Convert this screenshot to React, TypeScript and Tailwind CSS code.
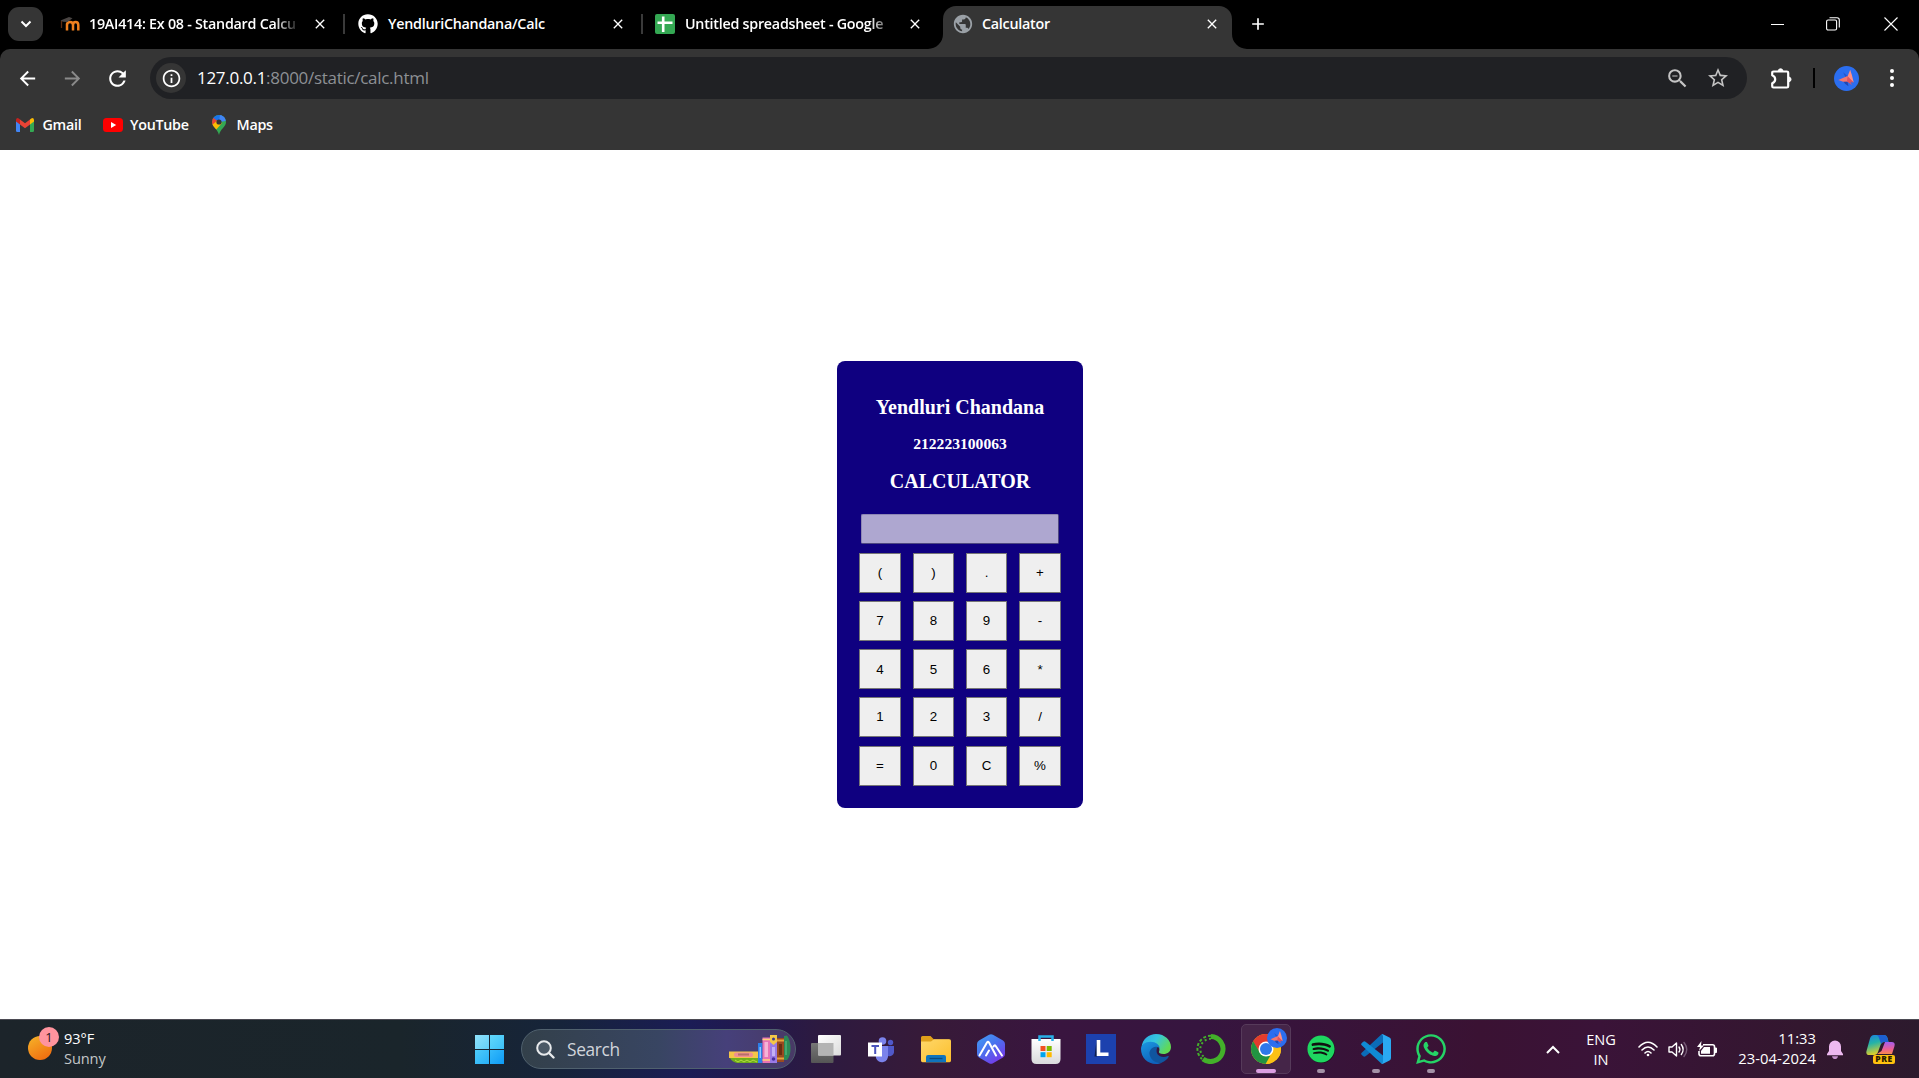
import React from "react";
import { MdArrowBack, MdArrowForward, MdRefresh, MdZoomOut, MdStarBorder, MdPublic, MdClose, MdAdd, MdInfoOutline } from "react-icons/md";
import { FaGithub, FaSpotify, FaWhatsapp } from "react-icons/fa";

const titleCls = "shrink-0 whitespace-nowrap text-[14.3px] font-semibold tracking-[-0.25px] leading-[20px] text-white";
const fadeCls = "[mask-image:linear-gradient(to_right,black_88%,transparent)]";

function TabClose() {
  return <MdClose className="size-[16px] shrink-0 text-white" />;
}

function Butterfly({ className }: { className: string }) {
  return (
    <svg viewBox="0 0 26 26" className={className}>
      <circle cx="13" cy="13" r="13" fill="#2b6ef0" />
      <path d="M9.500 6.500L14.500 11L12.500 13Z" fill="#2554cc" />
      <path d="M9 15L14 16L15 21L11.500 18.500Z" fill="#2346b0" />
      <path d="M4.500 14.500L14 10.500L15 16L9.500 16.500Z" fill="#f4766e" />
      <path d="M16.800 4L18.500 9L20.500 17L13.500 12.500Z" fill="#ff8f86" />
      <path d="M14 10.500L20.500 17.200L17 16.800L19 20L13.500 16Z" fill="#e2545e" />
    </svg>
  );
}

function MoodleIcon() {
  return (
    <svg viewBox="0 0 20 20" className="size-5 shrink-0">
      <path d="M7 16.500V9.500M7 11q0-3 3-3q3 0 3 3v5.500M13 11q0-3 2.600-3q2.700 0 2.700 3v5.500" fill="none" stroke="#f0801f" strokeWidth="2.500" />
      <path d="M0.500 6.500L9 3L12.500 4.200L7.500 8L3 7.800Z" fill="#4a4543" />
      <path d="M1.500 7V14" stroke="#5a2c12" strokeWidth="1.300" />
    </svg>
  );
}

function SheetsIcon() {
  return (
    <svg viewBox="0 0 20 20" className="size-5 shrink-0">
      <rect width="20" height="20" rx="2" fill="#34a853" />
      <path d="M8.200 2.500V18M2.500 8.800H17.500" stroke="#fff" strokeWidth="2.600" />
    </svg>
  );
}

function TabStrip() {
  return (
    <div className="flex h-[49px] shrink-0 items-start bg-black">
      <div className="ml-2 mt-[7px] flex h-[34px] w-[35px] shrink-0 items-center justify-center rounded-[11px] bg-[#353535]">
        <svg viewBox="0 0 12 8" className="h-[8px] w-[12px]"><path d="M1.500 1.500L6 6L10.500 1.500" stroke="#fff" strokeWidth="2" fill="none" /></svg>
      </div>
      <div className="flex h-12 w-[300px] shrink-0 items-center pl-[17px]">
        <MoodleIcon />
        <span className={`${titleCls} ${fadeCls} ml-[9px] w-[211px]`}>19AI414: Ex 08 - Standard Calcu</span>
        <span className="ml-[12px] flex"><TabClose /></span>
      </div>
      <div className="flex h-12 w-[298px] shrink-0 items-center">
        <span className="h-5 w-[2px] bg-[#3a3a3a]" />
        <FaGithub className="ml-[13px] size-[20px] shrink-0 text-white" />
        <span className={`${titleCls} ml-[10px] w-[210px]`}>YendluriChandana/Calc</span>
        <span className="ml-[12px] flex"><TabClose /></span>
      </div>
      <div className="flex h-12 w-[302px] shrink-0 items-center">
        <span className="h-5 w-[2px] bg-[#3a3a3a]" />
        <span className="ml-[12px] flex"><SheetsIcon /></span>
        <span className={`${titleCls} ${fadeCls} ml-[10px] w-[210px]`}>Untitled spreadsheet - Google</span>
        <span className="ml-[12px] flex"><TabClose /></span>
      </div>
      <div className="relative mt-[6px] flex h-[43px] w-[289px] shrink-0 items-center rounded-t-[13px] bg-[#353535] pb-[7px]">
        <svg viewBox="0 0 15 15" className="absolute bottom-0 -left-[15px] size-[15px]"><path d="M15 0V15H0A15 15 0 0 0 15 0Z" fill="#353535" /></svg>
        <svg viewBox="0 0 15 15" className="absolute bottom-0 -right-[15px] size-[15px]"><path d="M0 0V15H15A15 15 0 0 1 0 0Z" fill="#353535" /></svg>
        <MdPublic className="ml-[9px] size-[22px] shrink-0 text-[#9aa0a6]" />
        <span className={`${titleCls} ml-[8px] w-[222px]`}>Calculator</span>
        <TabClose />
      </div>
      <MdAdd className="ml-[16px] mt-[14px] size-[20px] text-white" />
      <div className="ml-auto mr-[21px] flex h-12 items-center">
        <span className="mr-[42px] h-px w-[13px] bg-white" />
        <svg viewBox="0 0 14 14" className="mr-[44px] size-[14px]" fill="none" stroke="#fff" strokeWidth="1.100">
          <rect x="0.600" y="3" width="10" height="10" rx="1.500" />
          <path d="M3.500 0.700H11Q13.300 0.700 13.300 3V10.500" />
        </svg>
        <svg viewBox="0 0 14 14" className="size-[14px]"><path d="M0.500 0.500L13.500 13.500M13.500 0.500L0.500 13.500" stroke="#fff" strokeWidth="1.100" /></svg>
      </div>
    </div>
  );
}

function Toolbar() {
  return (
    <div className="shrink-0 bg-black">
      <div className="flex h-[58px] items-start rounded-t-[10px] bg-[#353535] pt-2">
        <div className="flex h-[42px] w-[150px] shrink-0 items-center">
          <MdArrowBack className="ml-[16px] size-[23px] text-white" />
          <MdArrowForward className="ml-[22px] size-[23px] text-[#8a8a8a]" />
          <MdRefresh className="ml-[21px] size-[25px] text-white" />
        </div>
        <div className="flex h-[42px] w-[1597px] shrink-0 items-center rounded-full bg-[#202124] pl-[6px]">
          <span className="flex size-[30px] items-center justify-center rounded-full bg-[#353535]">
            <MdInfoOutline className="size-[21px] text-white" />
          </span>
          <span className="ml-[11px] whitespace-nowrap text-[17px] tracking-[-0.290px] text-[#8d9094]">
            <span className="text-white">127.0.0.1</span>:8000/static/calc.html
          </span>
          <MdZoomOut className="ml-auto size-[25px] text-[#c4c4c4]" />
          <MdStarBorder className="ml-[16px] mr-[17px] size-[24px] text-[#c4c4c4]" />
        </div>
        <div className="flex h-[42px] items-center">
          <svg viewBox="0 0 22 23" className="ml-[24px] h-[23px] w-[22px]">
            <path d="M2.500 4.500Q1.200 4.500 1.200 5.800V8.200Q4.200 9.500 4.200 12.200Q4.200 15 1.200 16.300V19.200Q1.200 20.500 2.500 20.500H15.800Q17.200 20.500 17.200 19.200V5.800Q17.200 4.500 15.800 4.500Z" fill="none" stroke="#fff" strokeWidth="2.200" strokeLinejoin="round" />
            <path d="M7.200 3.600A2.500 2.500 0 0 1 12 3.600ZM18.200 10A2.500 2.500 0 0 1 18.200 14.800Z" fill="#fff" stroke="#fff" />
          </svg>
          <span className="ml-[20px] h-5 w-[2px] bg-black" />
          <Butterfly className="ml-[19px] size-[25px]" />
          <span className="ml-[31px] flex flex-col gap-[3px]">
            <i className="size-1 rounded-full bg-white" />
            <i className="size-1 rounded-full bg-white" />
            <i className="size-1 rounded-full bg-white" />
          </span>
        </div>
      </div>
    </div>
  );
}

function Bookmarks() {
  const t = "whitespace-nowrap text-[14.300px] font-semibold tracking-[-0.270px] leading-[20px] text-white";
  return (
    <div className="flex h-[43px] shrink-0 items-start bg-[#353535] pl-4">
      <div className="flex h-[36px] w-[87px] items-center gap-[8.5px]">
        <svg viewBox="0 0 18 14" className="h-[14px] w-[18px]">
          <path d="M0 2V12.800Q0 14 1.200 14H4V5Z" fill="#4285f4" />
          <path d="M18 2V12.800Q18 14 16.800 14H14V5Z" fill="#34a853" />
          <path d="M14 1.500V6.500L18 3.500V2Q18 0 16.200 0Q15.500 0 14 1.500Z" fill="#fbbc04" />
          <path d="M0 3.500V2Q0 0 1.800 0Q2.500 0 4 1.500V6.500Z" fill="#c5221f" />
          <path d="M4 1.400L9 5.200L14 1.400V6.500L9 10.300L4 6.500Z" fill="#ea4335" />
        </svg>
        <span className={t}>Gmail</span>
      </div>
      <div className="flex h-[36px] w-[109px] items-center gap-[7px]">
        <svg viewBox="0 0 20 14" className="h-[14px] w-[20px]"><rect width="20" height="14" rx="3.500" fill="#f00" /><path d="M8 4L13.200 7L8 10Z" fill="#fff" /></svg>
        <span className={t}>YouTube</span>
      </div>
      <div className="flex h-[36px] items-center gap-[10.5px]">
        <svg viewBox="0 0 14 20" className="h-[20px] w-[14px]">
          <defs><clipPath id="pin"><path d="M7 0A7 7 0 0 0 0 7C0 12 5.500 13.500 7 20C8.500 13.500 14 12 14 7A7 7 0 0 0 7 0Z" /></clipPath></defs>
          <g clipPath="url(#pin)">
            <rect width="14" height="20" fill="#34a853" />
            <path d="M0 0H14V3L7 7L0 3Z" fill="#1a73e8" />
            <path d="M8 0H14V6L7 7Z" fill="#4285f4" />
            <path d="M0 2L7 7L1 13L-1 8Z" fill="#ea4335" />
            <path d="M0 10L6 5L10 8L3 16Z" fill="#fbbc04" />
          </g>
          <circle cx="7" cy="7" r="2.600" fill="#353535" />
        </svg>
        <span className={t}>Maps</span>
      </div>
    </div>
  );
}

const rows = [
  ["(", ")", ".", "+"],
  ["7", "8", "9", "-"],
  ["4", "5", "6", "*"],
  ["1", "2", "3", "/"],
  ["=", "0", "C", "%"],
];

function Calculator() {
  return (
    <div className="ml-[837px] flex h-[447px] w-[246px] flex-col rounded-[8px] bg-[#0f0080] px-[22px] pt-[35px] text-center font-['Liberation_Serif',serif] font-bold text-white">
      <div className="h-[24px] text-[20px] leading-[23px]">Yendluri Chandana</div>
      <div className="mt-[14px] h-[20px] text-[15.6px] leading-[20px]">212223100063</div>
      <div className="mt-[16px] h-[24px] text-[20px] leading-[22px]">CALCULATOR</div>
      <div className="ml-[2px] mt-[20px] h-[30px] w-[198px] shrink-0 rounded-[2px] border border-[#8d86b4] border-b-[#4d4780] border-r-[#4d4780] bg-[#aea7d0]" />
      <div className="mt-[9px] grid grid-cols-[42px_41px_41px_42px] grid-rows-[40px_40px_40px_41px_40px] gap-x-[12px] gap-y-[8px]">
        {rows.map((row, r) =>
          row.map((k) => (
            <button
              key={k}
              className={`h-[40px] border border-[#767676] bg-[#efefef] font-['Liberation_Sans',sans-serif] text-[13.333px] font-normal leading-none text-black ${r === 2 ? "pt-[2px]" : ""}`}
            >
              {k}
            </button>
          )),
        )}
      </div>
    </div>
  );
}

function TaskItem({ children, dot, active }: { children: React.ReactNode; dot?: boolean; active?: boolean }) {
  return (
    <div className={`relative flex h-[50px] w-[50px] shrink-0 items-center justify-center rounded-[5px] ${active ? "border border-[#563a5a] bg-[#452548]" : ""}`}>
      {children}
      {dot && <span className="absolute bottom-[1px] left-[21px] h-[4px] w-[8px] rounded-full bg-[#a391a6]" />}
      {active && <span className="absolute bottom-0 left-[14px] h-[4px] w-[20px] rounded-full bg-[#dc9fe2]" />}
    </div>
  );
}

const ic = "size-[30px]";

function TaskIcons() {
  return (
    <div className="ml-[5px] flex gap-[5px]">
      <TaskItem>
        <svg viewBox="0 0 30 30" className={ic}>
          <defs>
            <linearGradient id="tv1" x2="1" y2="1"><stop stopColor="#fff" /><stop offset="1" stopColor="#dcdcdc" /></linearGradient>
            <linearGradient id="tv2" x2="0" y2="1"><stop stopColor="#777" /><stop offset="1" stopColor="#555" /></linearGradient>
          </defs>
          <rect x="0" y="9" width="22.500" height="20" rx="1" fill="url(#tv2)" />
          <rect x="7" y="1" width="23" height="20.500" rx="1" fill="url(#tv1)" />
          <path d="M7 9H22.500V21.500H8Q7 21.500 7 20.500Z" fill="#b4b4b4" />
        </svg>
      </TaskItem>
      <TaskItem>
        <svg viewBox="0 0 30 30" className={ic}>
          <circle cx="16.500" cy="7" r="3.800" fill="#7b83eb" />
          <circle cx="24.500" cy="8.500" r="2.700" fill="#5059c9" />
          <path d="M19 12H28V18.500A5 5 0 0 1 19 20Z" fill="#5059c9" />
          <path d="M9 12H22V21A6.200 6.200 0 0 1 10 24Z" fill="#7b83eb" />
          <rect x="2" y="8.500" width="14" height="14" fill="#fff" />
          <path d="M5.500 12H13M9.200 12V20" stroke="#4b53bc" strokeWidth="2" />
        </svg>
      </TaskItem>
      <TaskItem>
        <svg viewBox="0 0 30 30" className={ic}>
          <defs><linearGradient id="fe" x2="1" y2="1"><stop stopColor="#ffd76a" /><stop offset="1" stopColor="#fcbf2c" /></linearGradient></defs>
          <path d="M0 3.500Q0 2 1.500 2H9.500L13 5.500H28V12H0Z" fill="#e0a01a" />
          <path d="M0 7.500H10L13 5.200H28.500Q30 5.200 30 7V26.500Q30 28.200 28.500 28.200H1.500Q0 28.200 0 26.500Z" fill="url(#fe)" />
          <path d="M5 28.200V23Q5 21 7 21H23Q25 21 25 23V28.200Z" fill="#0f74bd" />
          <path d="M8.500 24.500H21.500" stroke="#0a4a80" strokeWidth="1.300" />
        </svg>
      </TaskItem>
      <TaskItem>
        <svg viewBox="0 0 30 30" className={ic}>
          <defs><linearGradient id="hx" x2="0.700" y2="1"><stop stopColor="#40a2f5" /><stop offset="0.500" stopColor="#4a72ee" /><stop offset="1" stopColor="#7638ea" /></linearGradient></defs>
          <path d="M13 0.800Q15-0.500 17 0.800L27 6.500Q29 7.700 29 10V20Q29 22.300 27 23.500L17 29.200Q15 30.500 13 29.200L3 23.500Q1 22.300 1 20V10Q1 7.700 3 6.500Z" fill="url(#hx)" />
          <path d="M3.500 21.500L11 8.500Q12 7 13 8.500L20 21.500M10 21.500L13 16.500M17.500 12.500Q18.500 10.500 19.700 12L26 21.500" fill="none" stroke="#fff" strokeWidth="2" strokeLinejoin="round" strokeLinecap="round" />
        </svg>
      </TaskItem>
      <TaskItem>
        <svg viewBox="0 0 30 30" className={ic}>
          <defs><linearGradient id="st" x2="0" y2="1"><stop stopColor="#fff" /><stop offset="1" stopColor="#d9d9dc" /></linearGradient></defs>
          <path d="M8.500 7V2.500H21.500V7" fill="none" stroke="#28b0e8" strokeWidth="2.500" />
          <path d="M0.500 5H29.500V25Q29.500 30 24.500 30H5.500Q0.500 30 0.500 25Z" fill="url(#st)" />
          <path d="M8.500 5V7M21.500 5V7" stroke="#28b0e8" strokeWidth="2.500" />
          <path d="M9.500 12H14.500V17H9.500Z" fill="#f25022" /><path d="M15.700 12H20.700V17H15.700Z" fill="#7fba00" />
          <path d="M9.500 18.200H14.500V23.200H9.500Z" fill="#00a4ef" /><path d="M15.700 18.200H20.700V23.200H15.700Z" fill="#ffb900" />
        </svg>
      </TaskItem>
      <TaskItem>
        <svg viewBox="0 0 30 30" className={ic}>
          <rect width="30" height="30" fill="#1c41ae" />
          <path d="M10.500 6.500L8.500 22.500L11 22.500Z" fill="#0c1e4f" />
          <path d="M12.500 6V20.200H22.500" fill="none" stroke="#fff" strokeWidth="3.600" />
        </svg>
      </TaskItem>
      <TaskItem>
        <svg viewBox="0 0 30 30" className={ic}>
          <defs>
            <linearGradient id="e1" x2="1" y2="0.500"><stop stopColor="#2ba8e4" /><stop offset="0.500" stopColor="#35c6df" /><stop offset="1" stopColor="#61d955" /></linearGradient>
            <linearGradient id="e2" x2="0.500" y2="1"><stop stopColor="#1b98e0" /><stop offset="1" stopColor="#0f62bd" /></linearGradient>
          </defs>
          <path d="M0.500 13C1.500 5 8 0 15 0C24 0 30 6.500 30 13C30 17.500 26.500 20 22.500 20C19 20 17.500 18.700 18 17.500C20 14 16 9 10 9C5 9 1.500 11 0.500 13Z" fill="url(#e1)" />
          <path d="M0 15C0 11 4 7.800 9.500 7.800C15 7.800 18.500 11 18.700 14C14 11 8.500 16 10.500 21.500C12 26 17 29 21 28.500C19 29.600 17 30 15 30C6.500 30 0 23.500 0 15Z" fill="url(#e2)" />
          <path d="M16.500 13C12 11.500 8 16 8.500 20C9.500 26 15 29.500 20.500 28.700C24 27.500 26.500 25 27.700 22.800C28 22 27.500 21.700 26.800 22C20 25 13 20.500 16.500 13Z" fill="#10559f" />
        </svg>
      </TaskItem>
      <TaskItem>
        <svg viewBox="0 0 30 30" className={ic} fill="none" stroke="#43b02a">
          <path d="M15 2.500A12.500 12.500 0 1 1 7 25" strokeWidth="5" />
          <path d="M15 1.800A13.200 13.200 0 0 0 6 25" strokeWidth="2" strokeDasharray="3 2" />
          <path d="M15 4.800A10.300 10.300 0 0 0 8 23" strokeWidth="2" strokeDasharray="2 2.500" />
        </svg>
      </TaskItem>
      <TaskItem active>
        <svg viewBox="0 0 30 30" className={ic}>
          <defs><clipPath id="cc"><circle cx="15" cy="15" r="15" /></clipPath></defs>
          <g clipPath="url(#cc)">
            <rect width="30" height="30" fill="#fbc116" />
            <path d="M0 0H30V8H15L8.900 18.500L1.500 7Z" fill="#e33b2e" />
            <path d="M2 7L8.900 18.500Q11 22 15 22H21.100L14 32H0V7Z" fill="#229342" />
            <path d="M21.100 18.500L14.500 30H30V8H15Z" fill="#fbc116" />
          </g>
          <circle cx="15" cy="15" r="7.500" fill="#fff" /><circle cx="15" cy="15" r="6" fill="#2f78ea" />
        </svg>
        <Butterfly className="absolute right-[3px] top-[3px] size-[20px]" />
      </TaskItem>
      <TaskItem dot>
        <span className="flex size-[27px] items-center justify-center rounded-full bg-[#111]"><FaSpotify className="size-[28px] shrink-0 text-[#1ed760]" /></span>
      </TaskItem>
      <TaskItem dot>
        <svg viewBox="0 0 30 30" className={ic}>
          <path d="M22 0.500V8.500L4.500 22.300Q3.300 23.200 2.200 22.300L0.600 20.800Q-0.400 19.800 0.700 18.700L19.500 1.300Q20.700 0 22 0.500Z" fill="#0b6cb8" />
          <path d="M22 29.500V21.500L4.500 7.700Q3.300 6.800 2.200 7.700L0.600 9.200Q-0.400 10.200 0.700 11.300L19.500 28.700Q20.700 30 22 29.500Z" fill="#108ad3" />
          <path d="M22 0.200L28.500 3.400Q30 4.200 30 6V24Q30 25.800 28.500 26.600L22 29.800Q20.500 30 19.800 29.300Q22 30 22 27.500V2.500Q22 0 19.800 0.700Q20.500 0 22 0.200Z" fill="#2aa9f1" />
        </svg>
      </TaskItem>
      <TaskItem dot><FaWhatsapp className="size-[34px] shrink-0 text-[#25d366]" /></TaskItem>
    </div>
  );
}

function Books() {
  return (
    <svg viewBox="0 0 62 29" className="ml-auto mr-[4px] h-[29px] w-[62px]">
      <path d="M1 23H29V28H8Q3 27 1 23Z" fill="#6fae1c" />
      <path d="M6 25l3 2 3-2 3 2 3-2 3 2 3-2 4 2" fill="none" stroke="#b5dd3e" />
      <rect x="0" y="16.500" width="29" height="6.500" fill="#f4c548" />
      <rect x="5" y="17.500" width="19" height="4.500" rx="2" fill="#ef8f92" />
      <rect x="9" y="18.500" width="11" height="2" fill="#b87068" />
      <rect x="29" y="8" width="4.500" height="20" fill="#2c7fe8" /><rect x="30.500" y="12" width="1.500" height="11" fill="#8fc5ff" />
      <rect x="33.500" y="2.500" width="7.500" height="25.500" fill="#e873b5" /><rect x="35.500" y="7" width="3.500" height="15" fill="#f6b3d6" /><path d="M33.500 4.500h7.500M33.500 25h7.500" stroke="#ffd27a" strokeWidth="1.500" />
      <rect x="41" y="0" width="7" height="28" fill="#9a7be6" /><path d="M41 0h7v7l-3.500 3-3.500-3z" fill="#f4c848" /><circle cx="44.500" cy="4" r="1.500" fill="#3e3b8c" /><circle cx="44.500" cy="24" r="1.800" fill="#4a2fa0" /><rect x="43" y="12" width="3" height="9" fill="#c3b0f7" />
      <rect x="48" y="3" width="7" height="24" fill="#9a4a20" /><rect x="50" y="9" width="3" height="11" fill="#6b2e12" /><path d="M48 5.500h7M48 23.500h7" stroke="#e8a23c" strokeWidth="2" />
      <path d="M55 1L58 0.500Q61.500 5 61.500 14Q61.500 21 58 25H55Z" fill="#2c8a56" /><path d="M57 6v14" stroke="#5fc28a" />
    </svg>
  );
}

function Taskbar() {
  const line = "whitespace-nowrap text-[14.600px] leading-[20px] tracking-[-0.100px]";
  return (
    <div className="flex h-[59px] shrink-0 items-center border-t border-[#4b4a52] bg-[linear-gradient(90deg,#1c242a_0px,#1a252b_400px,#16243a_560px,#1b1c55_690px,#21194f_740px,#2d1a40_820px,#371a38_930px,#39153f_1060px,#36153f_1200px,#3a1233_1480px,#3a1338_1600px,#33172f_1800px,#2c1a2d_1919px)] text-white">
      <div className="flex h-full w-[475px] shrink-0 items-start pl-[28px]">
        <div className="relative mt-[16px] size-[24px] shrink-0 rounded-full bg-[linear-gradient(150deg,#f5b52a,#f0640c)]">
          <span className="absolute -right-[7px] -top-[9px] flex size-[20px] items-center justify-center rounded-full bg-[#ff949e] text-[13px] leading-none text-[#2b1518]">1</span>
        </div>
        <div className="ml-[12px] mt-[8px]">
          <div className={line}>93°F</div>
          <div className={`${line} text-[#c3c6c8]`}>Sunny</div>
        </div>
      </div>
      <div className="grid shrink-0 grid-cols-[14px_14px] gap-px">
        <i className="size-[14px] bg-[linear-gradient(135deg,#8fe2fb,#62cff8)]" />
        <i className="size-[14px] bg-[linear-gradient(135deg,#62d8fb,#3cc0f8)]" />
        <i className="size-[14px] bg-[linear-gradient(135deg,#4dcbfa,#28b0f8)]" />
        <i className="size-[14px] bg-[linear-gradient(135deg,#35bbfa,#0e9bf6)]" />
      </div>
      <div className="ml-[17px] flex h-[40px] w-[275px] shrink-0 items-center rounded-full border border-[#50616e] bg-[linear-gradient(90deg,#33404a,#384562_50%,#46407a_75%,#483a66)] pl-[14px]">
        <svg viewBox="0 0 19 19" className="size-[19px]"><circle cx="8" cy="8" r="6.800" fill="#4b5865" stroke="#e8eaec" strokeWidth="2" /><path d="M13 13L17.500 17.500" stroke="#e8eaec" strokeWidth="2.400" strokeLinecap="round" /></svg>
        <span className="ml-[12px] pt-[1px] text-[17.3px] tracking-[-0.330px] text-[#d2d5dc]">Search</span>
        <Books />
      </div>
      <TaskIcons />
      <svg viewBox="0 0 14 9" className="ml-[90px] h-[9px] w-[14px] shrink-0"><path d="M1 8L7 2L13 8" fill="none" stroke="#fff" strokeWidth="2" /></svg>
      <div className="ml-[25px] w-[32px] shrink-0 text-center">
        <div className={line}>ENG</div>
        <div className={line}>IN</div>
      </div>
      <svg viewBox="0 0 20 16" className="ml-[21px] h-[16px] w-[20px] shrink-0" fill="none" stroke="#fff" strokeWidth="1.600" strokeLinecap="round">
        <path d="M1 6Q10-3.500 19 6M4 9Q10 3 16 9M7 12Q10 9 13 12" /><circle cx="10" cy="14" r="1.300" fill="#fff" stroke="none" />
      </svg>
      <svg viewBox="0 0 21 17" className="ml-[10px] h-[17px] w-[21px] shrink-0" fill="none" stroke="#fff" strokeWidth="1.400" strokeLinejoin="round" strokeLinecap="round">
        <path d="M1 6H4L8.500 2V15L4 11H1Z" /><path d="M11 6Q12.800 8.500 11 11M13.300 3.500Q17 8.500 13.300 13.500" /><path d="M16 1.500Q21.500 8.500 16 15.500" stroke="#755a75" />
      </svg>
      <svg viewBox="0 0 21 17" className="ml-[8px] h-[17px] w-[21px] shrink-0">
        <path d="M6 3.800H15.500Q17.500 3.800 17.500 5.800V12.700Q17.500 14.700 15.500 14.700H4Q2 14.700 2 12.700V10" fill="none" stroke="#fff" strokeWidth="1.600" />
        <path d="M7 6H13V12.700H4V10Z" fill="#fff" /><path d="M18 7H19.500V11.500H18Z" fill="#fff" stroke="#fff" />
        <path d="M4.500 0L0 6H3L2 10L7 4.500H4Z" fill="#fff" />
      </svg>
      <div className="ml-[17px] w-[81px] shrink-0 pb-[2px] text-right">
        <div className="whitespace-nowrap text-[14.8px] leading-[20px]">11:33</div>
        <div className="whitespace-nowrap text-[14.8px] leading-[20px] tracking-[0.060px]">23-04-2024</div>
      </div>
      <svg viewBox="0 0 16 19" className="ml-[11px] h-[19px] w-[16px] shrink-0" fill="#edb9f0">
        <path d="M8 0.500A6 6 0 0 1 14 6.500V11L16 14V15.200H0V14L2 11V6.500A6 6 0 0 1 8 0.500Z" /><path d="M5 16.200H11Q10.500 19 8 19Q5.500 19 5 16.200Z" fill="#c48fcb" />
      </svg>
      <div className="relative ml-[23px] h-[30px] w-[30px] shrink-0">
        <svg viewBox="0 0 30 30" className="size-[30px]">
          <defs>
            <linearGradient id="cp1" x2="0.300" y2="1"><stop stopColor="#1b7fe0" /><stop offset="0.450" stopColor="#24b3a8" /><stop offset="1" stopColor="#e4cf26" /></linearGradient>
            <linearGradient id="cp2" x2="0" y2="1"><stop stopColor="#a55df0" /><stop offset="0.600" stopColor="#ec5f93" /><stop offset="1" stopColor="#f88a4c" /></linearGradient>
          </defs>
          <path d="M8 1H18Q20.500 1 21.500 4L22.500 8H18Q15.500 8 14.500 11L12 18Q11 21 8 21H3.500Q-0.500 21 0.500 17L4 4.500Q5 1 8 1Z" fill="url(#cp1)" />
          <path d="M18 1Q20.500 1 21.500 4L22.500 8H18Q16 8 15 10L13 4Q12.500 1.500 10.500 1Z" fill="#1c5fd0" />
          <path d="M19 8H25.500Q29.500 8 28.500 12L26 20H11L15.500 17Z" fill="url(#cp2)" />
        </svg>
        <span className="absolute bottom-0 left-[7px] flex h-[9px] w-[22px] items-center justify-center rounded-[2px] bg-[#ffc20e] text-[8.5px] font-extrabold leading-none tracking-[0.500px] text-[#2b1d00]">PRE</span>
      </div>
    </div>
  );
}

export default function App() {
  return (
    <div className="flex h-[1078px] w-[1919px] flex-col overflow-hidden bg-white font-['Open_Sans','Noto_Sans',sans-serif]">
      <TabStrip />
      <Toolbar />
      <Bookmarks />
      <main className="h-[869px] shrink-0 bg-white pt-[211px]">
        <Calculator />
      </main>
      <Taskbar />
    </div>
  );
}
